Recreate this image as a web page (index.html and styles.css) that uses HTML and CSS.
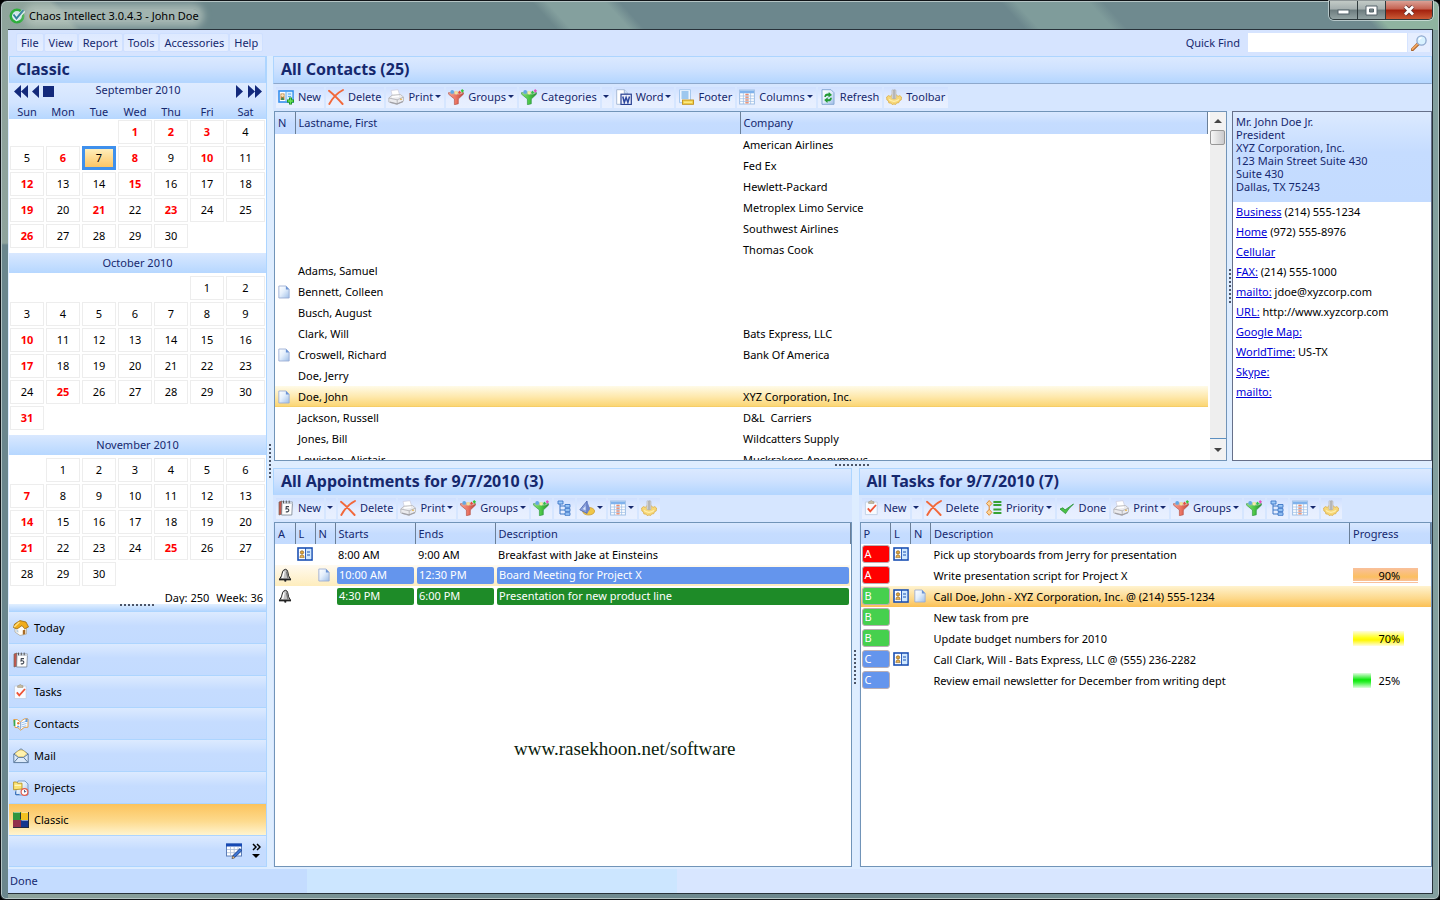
FILE: index.html
```html
<!DOCTYPE html>
<html lang="en">
<head>
<meta charset="utf-8">
<title>Chaos Intellect 3.0.4.3 - John Doe</title>
<link rel="stylesheet" href="styles.css">
</head>
<body>
<svg class="sprite" aria-hidden="true">
  <defs>
    <linearGradient id="g-page" x1="0" y1="0" x2="1" y2="1"><stop offset="0" stop-color="#fff"/><stop offset=".45" stop-color="#e4effc"/><stop offset="1" stop-color="#9fbfe8"/></linearGradient>
    <linearGradient id="g-red" x1="0" y1="0" x2="1" y2="0"><stop offset="0" stop-color="#f4a090"/><stop offset=".5" stop-color="#ec7462"/><stop offset="1" stop-color="#b8483c"/></linearGradient>
    <linearGradient id="g-green" x1="0" y1="0" x2="1" y2="0"><stop offset="0" stop-color="#8ee07a"/><stop offset=".5" stop-color="#4cc846"/><stop offset="1" stop-color="#2a8a32"/></linearGradient>
    <linearGradient id="g-metal" x1="0" y1="0" x2="1" y2="0"><stop offset="0" stop-color="#eee"/><stop offset=".5" stop-color="#a8a8a8"/><stop offset="1" stop-color="#dcdcdc"/></linearGradient>
  </defs>
  <symbol id="i-logo" viewBox="0 0 16 16"><circle cx="8" cy="8" r="6.2" fill="#cfe3ea" stroke="#2fae3c" stroke-width="2.6"/><path d="M4.5 6.5l3 4L15 2.5" fill="none" stroke="#e8f4f4" stroke-width="4"/><path d="M4.5 6.5l3 4L14.5 2" fill="none" stroke="#33809c" stroke-width="2"/></symbol>
  <symbol id="i-card" viewBox="0 0 16 16"><rect x="1" y="2" width="14" height="12" fill="#fff" stroke="#1b50b4" stroke-width="1.6"/><path d="M8.6 2v12" stroke="#1b50b4"/><rect x="9" y="3" width="5.2" height="10" fill="#cfe8ff"/><path d="M10 6h3M10 9h3" stroke="#1b50b4"/><circle cx="5" cy="6.4" r="1.7" fill="#e2a73c" stroke="#73501a" stroke-width=".6"/><path d="M2.8 11.6q0-2.8 2.2-2.8t2.2 2.8z" fill="#ecb552" stroke="#73501a" stroke-width=".5"/></symbol>
  <symbol id="i-newcard" viewBox="0 0 16 16"><rect x="1" y="2" width="14" height="11" fill="#fff" stroke="#3590ee" stroke-width="1.6"/><rect x="8.4" y="3" width="5.8" height="9.4" fill="#d7efff"/><path d="M8 2v11M10 5h3M10 7.5h3" stroke="#58a9f0"/><rect x="2.5" y="4.5" width="4" height="6.5" fill="#b8813a"/><circle cx="4.5" cy="6.5" r="1.4" fill="#fae0b6"/><path d="M3 11q.3-2.4 1.5-2.4T6 11z" fill="#3a8b56"/><path d="M12.5 8.5v7M9 12h7" stroke="#168c1d" stroke-width="3"/><path d="M12.500 9.300v5.400M9.800 12h5.400" stroke="#69e35a" stroke-width="1.400"/></symbol>
  <symbol id="i-x" viewBox="0 0 16 16"><path d="M1 1.800C5 5 10 10 14.600 15M15 1C9 4 4 10 1.300 15" fill="none" stroke="#f2683a" stroke-width="1.900" stroke-linecap="round"/></symbol>
  <symbol id="i-print" viewBox="0 0 16 16"><path d="M4.500 8L3 1.500l7-.8L12 7z" fill="#fff" stroke="#ccd" stroke-width=".7"/><path d="M.8 9L4 6.200l8.500-.7 3 2.600v4L9 15.400.8 13z" fill="#ebebee" stroke="#b5b5b8" stroke-width=".8"/><path d="M.8 9l8.400 1.800 6.300-2.700M9.200 10.800v4.400" fill="none" stroke="#acacb0" stroke-width=".8"/><path d="M2 12.600l7 1.700 6-2.400v1.400l-6 2.200-7-1.700z" fill="#a0a0a6"/><path d="M4 8l7-.8" stroke="#fff" stroke-width="1.400"/><circle cx="13" cy="10.200" r=".8" fill="#e8a41c"/></symbol>
  <symbol id="i-funnelr" viewBox="0 0 16 16"><path d="M.6 3.600h14.800v1.600L10.300 10v4.800L6.400 15.700V10L.6 5.200z" fill="url(#g-red)" stroke="#b0483a" stroke-width=".6"/><ellipse cx="8" cy="4" rx="7" ry="1.600" fill="#d8a49a"/><circle cx="4.200" cy="2.900" r="1.900" fill="#62a8e4"/><circle cx="8.200" cy="3.800" r="1.700" fill="#f2e29a"/><path d="M10.200 3.400l1.300-1.900 1.500 1.900-1.500 1.700z" fill="#e64b3c"/><path d="M14.200 0L16 1.800l-1.600 1.900-1.700-1.900z" fill="#35c435"/></symbol>
  <symbol id="i-funnelg" viewBox="0 0 16 16"><path d="M.6 3.600h14.800v1.600L10.300 10v4.800L6.400 15.700V10L.6 5.200z" fill="url(#g-green)" stroke="#25913a" stroke-width=".6"/><ellipse cx="8" cy="4" rx="7" ry="1.600" fill="#92c898"/><circle cx="4.200" cy="2.900" r="1.900" fill="#62a8e4"/><circle cx="8.200" cy="3.800" r="1.700" fill="#f6eca6"/><path d="M10.200 3.400l1.300-1.900 1.500 1.900-1.500 1.700z" fill="#2fbf4a"/><path d="M14.200 0L16 1.800l-1.600 1.900-1.700-1.900z" fill="#e452c0"/></symbol>
  <symbol id="i-word" viewBox="0 0 16 16"><path d="M.7.7h7.600l3.400 3.600v11H.7z" fill="#fff" stroke="#a8bcd8"/><path d="M8.300.7v3.600h3.400" fill="#d5e5fa" stroke="#8fa8cc" stroke-width=".8"/><rect x="5" y="5.200" width="10.300" height="10.300" fill="#eef0fb" stroke="#273f92" stroke-width="1.200"/><path d="M6.800 7.500l1.500 6 1.800-5 1.800 5 1.600-6" fill="none" stroke="#2c479e" stroke-width="1.500"/></symbol>
  <symbol id="i-footer" viewBox="0 0 16 16"><path d="M1.500.7h11v13h-11z" fill="#eef6ff" stroke="#a6c8ee"/><path d="M3.500 3h7M3.500 5h7M3.500 7h7M3.500 9h7" stroke="#4f9ae0" stroke-width="1.100"/><rect x="4.500" y="11" width="11" height="4.300" fill="#f2d44a" stroke="#c08f1c" stroke-width=".9"/><path d="M6 13.200h8" stroke="#fff2a0"/></symbol>
  <symbol id="i-cols" viewBox="0 0 16 16"><rect x=".6" y="1" width="14.800" height="14" fill="#fff" stroke="#9fbfe6"/><path d="M1 1.500h14v2.800H1z" fill="#7fb2ec"/><path d="M6.200 4.300h3.600V15H6.200z" fill="#f8d3c5"/><path d="M1 7h14M1 9.700h14M1 12.400h14M4.400 4v11M8 4v11M11.600 4v11" stroke="#9bbce4" stroke-width=".7"/><path d="M6.500 5.500h3M6.500 8.300h3M6.500 11h3M6.500 13.700h3" stroke="#ee8a6c"/></symbol>
  <symbol id="i-refresh" viewBox="0 0 16 16"><path d="M2 .7h9l3 3v11.600H2z" fill="url(#g-page)" stroke="#86a8d4"/><path d="M4.300 8Q4.600 4.200 8.600 4.600l.2-1.600 3.200 3-3.600 2.600.1-1.900Q6 6.400 5.900 8zM11.900 8.700q-.3 4-4.300 3.600l-.2 1.600-3.200-3 3.600-2.600-.1 1.900q2.400.2 2.500-1.500z" fill="#239a35"/></symbol>
  <symbol id="i-hand" viewBox="0 0 16 16"><path d="M.6 8l2-1.400 1.600.8L5.600 6h5L12 7.400l1.800-.8L15.500 8l-.3 3-1.700.7-.7 2-2.200.3-1 1.600-1.600-.6-1.800.6-1-1.400-2.400-.3-.3-2L.9 11z" fill="#f7d879" stroke="#d8a83c" stroke-width=".7"/><path d="M3 10.600q5 3.400 10 0" fill="none" stroke="#fff0b0" stroke-width="1.200"/><path d="M5.900 1.200q.9-.9 1.900-.2.900-1 2.200.3v8q-2 1.400-4.100 0z" fill="url(#g-metal)" stroke="#aaa" stroke-width=".5"/></symbol>
  <symbol id="i-cal" viewBox="0 0 16 16"><path d="M1 2l3-1v13L1 15z" fill="#c4574e" stroke="#765" stroke-width=".7"/><path d="M4 2h10.500L13.800 15H3.600z" fill="#fdfdfd" stroke="#77818e" stroke-width=".8"/><path d="M4 2h10.500v2H4z" fill="#ccd3dc"/><path d="M5.500.6v2.700M8.300.6v2.700M11.200.6v2.700" stroke="#555"/><path d="M11 6.600H8.300L8 9q2.600-.7 2.800 1.100T7.800 11.900" fill="none" stroke="#3c4450" stroke-width="1.100"/></symbol>
  <symbol id="i-task" viewBox="0 0 16 16"><path d="M1.400 2h11.800v12.600H1.400z" fill="#f8fbff" stroke="#c0cfe4" stroke-width=".9"/><path d="M4.600 3.400V1.800L6 1.400Q7.300-.5 8.600 1.400l1.400.4v1.600z" fill="#c9bda0" stroke="#94866e" stroke-width=".5"/><path d="M3.800 8.300l2.500 3L12 5" fill="none" stroke="#ee5335" stroke-width="1.800"/></symbol>
  <symbol id="i-tree" viewBox="0 0 16 16"><path d="M4 3v11h5M4 6h5M4 10h5" fill="none" stroke="#3c76c6"/><path d="M2 1h5v3H2zM9 4.500h5v2.800H9zM9 8.600h5v2.800H9zM9 12.700h5v2.600H9z" fill="#9fcbfa" stroke="#3c76c6" stroke-width=".9"/></symbol>
  <symbol id="i-shapes" viewBox="0 0 16 16"><ellipse cx="9.600" cy="11.200" rx="6" ry="3.800" fill="#efc648" stroke="#c99d38" stroke-width=".8"/><path d="M8 1v12.400L.8 9.800z" fill="#8aa0dc" stroke="#4862ad" stroke-width=".8"/><path d="M8 1l3.200 8L8 13.400z" fill="#6c84cb"/><path d="M6.500 6v4.300L3.800 9z" fill="#d7e4fc"/></symbol>
  <symbol id="i-prio" viewBox="0 0 16 16"><path d="M7.400 2h8M7.400 5h8M7.400 9.500h8M7.400 13h8" stroke="#37a234" stroke-width="1.800"/><path d="M3.200.5l2.700 3-2.700 3-2.700-3zM3.200 9.300l2.700 3-2.700 3-2.700-3z" fill="#fbd49a" stroke="#dc8428" stroke-width=".9"/><path d="M3.200 6.500v3" stroke="#dc8428"/></symbol>
  <symbol id="i-check" viewBox="0 0 16 16"><path d="M1 9l3-1.200 2 2.200L14.500 4q-5.500 5-8 9.600z" fill="#4cc344" stroke="#269033" stroke-width=".8"/></symbol>
  <symbol id="i-page" viewBox="0 0 14 16"><path d="M1 1h8.400L13 4.800V15H1z" fill="url(#g-page)" stroke="#98abd2"/><path d="M9.200 1v4H13z" fill="#6c94d4"/></symbol>
  <symbol id="i-bell" viewBox="0 0 16 16"><path d="M8.500 2.300Q6 2.700 5.500 5 5 9 2.500 12.200h11Q11 9 10.800 4.800 10.200 2.400 8.500 2.300z" fill="#c3c3c3" stroke="#222"/><path d="M7 4.500L5.600 11" stroke="#fff" stroke-width="1.400"/><path d="M9.500 4.500L11 11" stroke="#777" stroke-width="1.400"/><path d="M2 12.600h12" stroke="#222" stroke-width="1.500"/><circle cx="8.300" cy="13.700" r="1.100" fill="#222"/></symbol>
  <symbol id="i-home" viewBox="0 0 16 16"><path d="M2 8l5-3.500L13.500 8v6L7 15.500 2 12z" fill="#fffdf8" stroke="#aaa08a" stroke-width=".7"/><path d="M.5 7.500L1.600 4 7 .6 13 2l2.500 5-3.800 1.800L9 5.600 4 9z" fill="#f0ac1b" stroke="#9b6813" stroke-width=".8"/><path d="M1.200 7l5.200-5" stroke="#ffe083" stroke-width="1.500"/><path d="M9.800 10.200l2.500-.8V14l-2.500.8z" fill="#a76a24"/><path d="M3.400 9.500l2 1v2.200l-2-1z" fill="#b9cede"/></symbol>
  <symbol id="i-book" viewBox="0 0 16 16"><path d="M.7 3.500q4-1 6.800 2.600Q11 1.500 15 3v8.200q-4-1-7.300 3Q5 10.500 2 11.400z" fill="#fff" stroke="#e0a04e"/><path d="M1.500 4v6" stroke="#36a850" stroke-width="1.700"/><path d="M7.600 6v7.500" stroke="#8faace"/><path d="M8.300 7l5.200-1.800M8.300 9l5.200-1.600M8.300 11l5-1.300" stroke="#9cc2ee"/><circle cx="5.300" cy="7.200" r="1.200" fill="#e87832"/><path d="M4 11q.8-3 3 .4zM12.500 3v3h2V2.500z" fill="#5b9be5"/></symbol>
  <symbol id="i-mail" viewBox="0 0 16 16"><path d="M.8 6L8 .8 15.200 6v8.600H.8z" fill="#dceafa" stroke="#5e7c9f"/><path d="M2.200 5.500Q8-1.600 13.800 5.500l-3 3.400H5.200z" fill="#fff2ae" stroke="#dbb84f" stroke-width=".7"/><path d="M.8 6l4.600 3.400h5.200L15.200 6M1 14.400l4.400-5M15 14.400l-4.400-5" fill="none" stroke="#5e7c9f"/></symbol>
  <symbol id="i-proj" viewBox="0 0 16 16"><path d="M5 1h7l3 3v11H3V7z" fill="url(#g-page)" stroke="#6e95c6" stroke-width=".9"/><path d="M.6 2h3l1 1.200H9V9L.6 9.800z" fill="#fbe372" stroke="#b79427" stroke-width=".9"/><path d="M1.500 5.300h6.600" stroke="#fffbd0"/><circle cx="11.500" cy="12" r="3.400" fill="#fff" stroke="#e35b4a" stroke-width="1.200"/><path d="M11.500 10v2.200l1.800-1" fill="none" stroke="#55658c"/><path d="M2.500 11.500v3h4" fill="none" stroke="#3e75be"/></symbol>
  <symbol id="i-classic" viewBox="0 0 16 16"><path d="M0 0h8v8H0z" fill="#30953e"/><path d="M8 0h8v8H8z" fill="#f3c221"/><path d="M0 8h8v8H0z" fill="#92304c"/><path d="M8 8h8v8H8z" fill="#15368e"/><path d="M0 15.500h16M7.500 1v6M15.500 0v16" stroke="#222a3a" stroke-width=".9"/><path d="M.5.500H7M8.500.5H15M8.500 8.500H15" stroke="#fff" stroke-opacity=".5"/></symbol>
  <symbol id="i-config" viewBox="0 0 16 16"><rect x=".5" y="1" width="15" height="12" fill="#fff" stroke="#5c7db8"/><path d="M0 .5h16v3H0z" fill="#1649b4"/><path d="M1 6.500h14M1 9.700h14M4.500 4v9M8.200 4v9M12 4v9" stroke="#a9bbd8" stroke-width=".8"/><path d="M14 5.600l1.900 1.900-7 6.800-2.700 1.100.8-2.900z" fill="#3d76d4" stroke="#12357f" stroke-width=".8"/><path d="M6 15.700l.8-3 2.200 2z" fill="#f3c690" stroke="#50401c" stroke-width=".4"/></symbol>
  <symbol id="i-find" viewBox="0 0 16 16"><path d="M1.400 14.600L7 9" stroke="#a9622c" stroke-width="3.200" stroke-linecap="round"/><path d="M1.400 14.200L6.800 8.900" stroke="#f4a862" stroke-width="1.700" stroke-linecap="round"/><circle cx="10.500" cy="5.500" r="4.600" fill="#d9f2ff" stroke="#8fa9cf" stroke-width="1.300"/><path d="M8 5q.5-2 2.600-2.300" fill="none" stroke="#fff" stroke-width="1.500"/></symbol>
</svg>

<div class="window">
  <header class="titlebar">
    <h1 class="app-name"><svg class="icon"><use href="#i-logo"/></svg><span>Chaos Intellect 3.0.4.3 - John Doe</span></h1>
    <div class="win-buttons">
      <button class="win-btn" aria-label="Minimize"><svg width="14" height="10"><rect x="1" y="5" width="11" height="4" fill="#fff" stroke="#55636a"/></svg></button>
      <button class="win-btn" aria-label="Maximize"><svg width="13" height="11"><path d="M1 1h11v9H1zM4.500 4v3h4V4z" fill="#fff" fill-rule="evenodd" stroke="#55636a"/></svg></button>
      <button class="win-btn win-close" aria-label="Close"><svg width="14" height="11"><path d="M3 1.500l8 8M11 1.500l-8 8" stroke="#5c3030" stroke-width="4.400"/><path d="M3 1.500l8 8M11 1.500l-8 8" stroke="#fff" stroke-width="2.800"/></svg></button>
    </div>
  </header>

  <div class="client">
    <div class="menubar">
      <nav class="menus">
        <button>File</button><button>View</button><button>Report</button><button>Tools</button><button>Accessories</button><button>Help</button>
      </nav>
      <form class="quick-find">
        <label for="find">Quick Find</label>
        <input id="find" type="text">
        <button type="button" aria-label="Search"><svg class="icon"><use href="#i-find"/></svg></button>
      </form>
    </div>

    <div class="workspace">
      <aside class="sidebar">
        <h2 class="title">Classic</h2>
        <div class="month-nav">
          <div class="steps">
            <button aria-label="Previous year"><svg width="14" height="13"><path d="M7 0v13L0 6.500zM14 0v13L7 6.500z"/></svg></button>
            <button aria-label="Previous month"><svg width="7" height="13"><path d="M7 0v13L0 6.500z"/></svg></button>
            <button aria-label="Today"><svg width="11" height="11"><path d="M0 0h11v11H0z"/></svg></button>
          </div>
          <span>September 2010</span>
          <div class="steps steps-next">
            <button aria-label="Next month"><svg width="7" height="13"><path d="M0 0v13l7-6.500z"/></svg></button>
            <button aria-label="Next year"><svg width="14" height="13"><path d="M0 0v13l7-6.500zM7 0v13l7-6.500z"/></svg></button>
          </div>
        </div>
        <div class="months">
          <table class="month" data-offset="3" data-days="30" data-busy="1,2,3,6,8,10,12,15,19,21,23,26" data-today="7">
            <thead><tr><th>Sun</th><th>Mon</th><th>Tue</th><th>Wed</th><th>Thu</th><th>Fri</th><th>Sat</th></tr></thead>
          </table>
          <h3 class="month-name">October 2010</h3>
          <table class="month" data-offset="5" data-days="31" data-busy="10,17,25,31"></table>
          <h3 class="month-name">November 2010</h3>
          <table class="month" data-offset="1" data-days="30" data-busy="7,14,21,25"></table>
          <p class="day-count"><span>Day: 250</span><span>Week: 36</span></p>
        </div>
        <div class="nav-splitter"><i class="grip"></i></div>
        <nav class="nav">
          <button><svg class="icon"><use href="#i-home"/></svg>Today</button>
          <button><svg class="icon"><use href="#i-cal"/></svg>Calendar</button>
          <button><svg class="icon"><use href="#i-task"/></svg>Tasks</button>
          <button><svg class="icon"><use href="#i-book"/></svg>Contacts</button>
          <button><svg class="icon"><use href="#i-mail"/></svg>Mail</button>
          <button><svg class="icon"><use href="#i-proj"/></svg>Projects</button>
          <button class="active"><svg class="icon"><use href="#i-classic"/></svg>Classic</button>
        </nav>
        <div class="nav-foot">
          <button aria-label="Configure"><svg class="icon"><use href="#i-config"/></svg></button>
          <button aria-label="More"><svg width="9" height="16"><path d="M1 1l3 3-3 3M5 1l3 3-3 3" fill="none" stroke="#000" stroke-width="1.500"/><path d="M0 11h8l-4 4z"/></svg></button>
        </div>
      </aside>

      <div class="splitter-v slim"><i class="grip grip-v"></i></div>

      <main class="panels">
        <section class="panel upper">
          <h2 class="title">All Contacts (25)</h2>
          <div class="toolbar">
            <button><svg class="icon"><use href="#i-newcard"/></svg>New</button>
            <button><svg class="icon"><use href="#i-x"/></svg>Delete</button>
            <button class="drop"><svg class="icon"><use href="#i-print"/></svg>Print</button>
            <button class="drop"><svg class="icon"><use href="#i-funnelr"/></svg>Groups</button>
            <button><svg class="icon"><use href="#i-funnelg"/></svg>Categories</button><button class="drop lone" aria-label="Category options"></button>
            <button class="drop"><svg class="icon"><use href="#i-word"/></svg>Word</button>
            <button><svg class="icon"><use href="#i-footer"/></svg>Footer</button>
            <button class="drop"><svg class="icon"><use href="#i-cols"/></svg>Columns</button>
            <button><svg class="icon"><use href="#i-refresh"/></svg>Refresh</button>
            <button><svg class="icon"><use href="#i-hand"/></svg>Toolbar</button>
          </div>
          <div class="contacts">
            <div class="listbox with-scroll">
              <div class="scroll-view">
                <table class="grid">
                  <colgroup><col class="c-n"><col class="c-name"><col></colgroup>
                  <thead><tr><th>N</th><th>Lastname, First</th><th>Company</th></tr></thead>
                  <tbody>
                    <tr><td></td><td></td><td>American Airlines</td></tr>
                    <tr><td></td><td></td><td>Fed Ex</td></tr>
                    <tr><td></td><td></td><td>Hewlett-Packard</td></tr>
                    <tr><td></td><td></td><td>Metroplex Limo Service</td></tr>
                    <tr><td></td><td></td><td>Southwest Airlines</td></tr>
                    <tr><td></td><td></td><td>Thomas Cook</td></tr>
                    <tr><td></td><td>Adams, Samuel</td><td></td></tr>
                    <tr><td><svg class="page"><use href="#i-page"/></svg></td><td>Bennett, Colleen</td><td></td></tr>
                    <tr><td></td><td>Busch, August</td><td></td></tr>
                    <tr><td></td><td>Clark, Will</td><td>Bats Express, LLC</td></tr>
                    <tr><td><svg class="page"><use href="#i-page"/></svg></td><td>Croswell, Richard</td><td>Bank Of America</td></tr>
                    <tr><td></td><td>Doe, Jerry</td><td></td></tr>
                    <tr class="selected"><td><svg class="page"><use href="#i-page"/></svg></td><td>Doe, John</td><td>XYZ Corporation, Inc.</td></tr>
                    <tr><td></td><td>Jackson, Russell</td><td>D&amp;L&nbsp; Carriers</td></tr>
                    <tr><td></td><td>Jones, Bill</td><td>Wildcatters Supply</td></tr>
                    <tr><td></td><td>Lewiston, Alistair</td><td>Muckrakers Anonymous</td></tr>
                  </tbody>
                </table>
              </div>
              <div class="scrollbar">
                <button class="sb-up" aria-label="Scroll up"></button>
                <div class="sb-track"><div class="sb-thumb"></div></div>
                <button class="sb-down" aria-label="Scroll down"></button>
              </div>
            </div>
            <div class="splitter-v narrow"><i class="grip grip-v"></i></div>
            <aside class="details">
              <address class="details-head">Mr. John Doe Jr.<br>President<br>XYZ Corporation, Inc.<br>123 Main Street Suite 430<br>Suite 430<br>Dallas, TX 75243</address>
              <ul class="details-list">
                <li><a href="#">Business</a> (214) 555-1234</li>
                <li><a href="#">Home</a> (972) 555-8976</li>
                <li><a href="#">Cellular</a></li>
                <li><a href="#">FAX:</a> (214) 555-1000</li>
                <li><a href="#">mailto:</a> jdoe@xyzcorp.com</li>
                <li><a href="#">URL:</a> http://www.xyzcorp.com</li>
                <li><a href="#">Google Map:</a></li>
                <li><a href="#">WorldTime:</a> US-TX</li>
                <li><a href="#">Skype:</a></li>
                <li><a href="#">mailto:</a></li>
              </ul>
            </aside>
          </div>
        </section>

        <div class="splitter-h"><i class="grip"></i></div>

        <div class="lower">
          <section class="panel">
            <h2 class="title">All Appointments for 9/7/2010 (3)</h2>
            <div class="toolbar">
              <button><svg class="icon"><use href="#i-cal"/></svg>New</button><button class="drop lone" aria-label="New options"></button>
              <button><svg class="icon"><use href="#i-x"/></svg>Delete</button>
              <button class="drop"><svg class="icon"><use href="#i-print"/></svg>Print</button>
              <button class="drop"><svg class="icon"><use href="#i-funnelr"/></svg>Groups</button>
              <button aria-label="Categories"><svg class="icon"><use href="#i-funnelg"/></svg></button>
              <button aria-label="Tree"><svg class="icon"><use href="#i-tree"/></svg></button>
              <button class="drop" aria-label="View"><svg class="icon"><use href="#i-shapes"/></svg></button>
              <button class="drop" aria-label="Columns"><svg class="icon"><use href="#i-cols"/></svg></button>
              <button aria-label="Toolbar"><svg class="icon"><use href="#i-hand"/></svg></button>
            </div>
            <div class="listbox">
              <table class="grid">
                <colgroup><col class="c-n"><col class="c-n"><col class="c-n"><col class="c-time"><col class="c-time"><col></colgroup>
                <thead><tr><th>A</th><th>L</th><th>N</th><th>Starts</th><th>Ends</th><th>Description</th></tr></thead>
                <tbody>
                  <tr><td></td><td><svg class="icon"><use href="#i-card"/></svg></td><td></td><td>8:00 AM</td><td>9:00 AM</td><td>Breakfast with Jake at Einsteins</td></tr>
                  <tr class="selected pale"><td><svg class="icon"><use href="#i-bell"/></svg></td><td></td><td><svg class="page"><use href="#i-page"/></svg></td><td><span class="fill blue">10:00 AM</span></td><td><span class="fill blue">12:30 PM</span></td><td><span class="fill blue">Board Meeting for Project X</span></td></tr>
                  <tr><td><svg class="icon"><use href="#i-bell"/></svg></td><td></td><td></td><td><span class="fill green">4:30 PM</span></td><td><span class="fill green">6:00 PM</span></td><td><span class="fill green">Presentation for new product line</span></td></tr>
                </tbody>
              </table>
              <p class="watermark">www.rasekhoon.net/software</p>
            </div>
          </section>
          <div class="splitter-v"><i class="grip grip-v"></i></div>
          <section class="panel">
            <h2 class="title">All Tasks for 9/7/2010 (7)</h2>
            <div class="toolbar">
              <button><svg class="icon"><use href="#i-task"/></svg>New</button><button class="drop lone" aria-label="New options"></button>
              <button><svg class="icon"><use href="#i-x"/></svg>Delete</button>
              <button class="drop"><svg class="icon"><use href="#i-prio"/></svg>Priority</button>
              <button><svg class="icon"><use href="#i-check"/></svg>Done</button>
              <button class="drop"><svg class="icon"><use href="#i-print"/></svg>Print</button>
              <button class="drop"><svg class="icon"><use href="#i-funnelr"/></svg>Groups</button>
              <button aria-label="Categories"><svg class="icon"><use href="#i-funnelg"/></svg></button>
              <button aria-label="Tree"><svg class="icon"><use href="#i-tree"/></svg></button>
              <button class="drop" aria-label="Columns"><svg class="icon"><use href="#i-cols"/></svg></button>
              <button aria-label="Toolbar"><svg class="icon"><use href="#i-hand"/></svg></button>
            </div>
            <div class="listbox">
              <table class="grid">
                <colgroup><col class="c-p"><col class="c-n"><col class="c-n"><col><col class="c-prog"></colgroup>
                <thead><tr><th>P</th><th>L</th><th>N</th><th>Description</th><th>Progress</th></tr></thead>
                <tbody>
                  <tr><td><span class="prio a">A</span></td><td><svg class="icon"><use href="#i-card"/></svg></td><td></td><td>Pick up storyboards from Jerry for presentation</td><td></td></tr>
                  <tr><td><span class="prio a">A</span></td><td></td><td></td><td>Write presentation script for Project X</td><td><div class="meter"><i class="bar orange" style="width:90%"></i><span>90%</span></div></td></tr>
                  <tr class="selected"><td><span class="prio b">B</span></td><td><svg class="icon"><use href="#i-card"/></svg></td><td><svg class="page"><use href="#i-page"/></svg></td><td>Call Doe, John - XYZ Corporation, Inc. @ (214) 555-1234</td><td></td></tr>
                  <tr><td><span class="prio b">B</span></td><td></td><td></td><td>New task from pre</td><td></td></tr>
                  <tr><td><span class="prio b">B</span></td><td></td><td></td><td>Update budget numbers for 2010</td><td><div class="meter"><i class="bar yellow" style="width:70%"></i><span>70%</span></div></td></tr>
                  <tr><td><span class="prio c">C</span></td><td><svg class="icon"><use href="#i-card"/></svg></td><td></td><td>Call Clark, Will - Bats Express, LLC @ (555) 236-2282</td><td></td></tr>
                  <tr><td><span class="prio c">C</span></td><td></td><td></td><td>Review email newsletter for December from writing dept</td><td><div class="meter"><i class="bar lime" style="width:25%"></i><span>25%</span></div></td></tr>
                </tbody>
              </table>
            </div>
          </section>
        </div>
      </main>
    </div>

    <footer class="status">Done</footer>
  </div>
</div>
<script src="calendar.js"></script>
</body>
</html>
```
FILE: calendar.js
```js
// Fills each month table with week rows of day buttons.
document.querySelectorAll('.month').forEach(function (table) {
  var offset = Number(table.dataset.offset);
  var days = Number(table.dataset.days);
  var busy = table.dataset.busy.split(',').map(Number);
  var today = Number(table.dataset.today || 0);
  var body = document.createElement('tbody');
  var row;
  for (var i = 0; i < offset + days; i++) {
    if (i % 7 === 0) {
      row = document.createElement('tr');
      body.appendChild(row);
    }
    var cell = document.createElement('td');
    var day = i - offset + 1;
    if (day > 0) {
      var button = document.createElement('button');
      button.textContent = day;
      button.className = 'day' + (busy.includes(day) ? ' busy' : '') + (day === today ? ' today' : '');
      cell.appendChild(button);
    }
    row.appendChild(cell);
  }
  table.appendChild(body);
});
```
FILE: styles.css
```css
* { box-sizing: border-box; }

body {
  margin: 0;
  font: 11px/13px "Noto Sans", "Open Sans", sans-serif;
  color: #000;
  background: #000;
}

button, input { font: inherit; color: inherit; }
button { margin: 0; padding: 0; border: 0; background: none; }
h1, h2, h3, p, ul { margin: 0; padding: 0; font-size: inherit; font-weight: inherit; }
svg { display: block; flex: none; }
.sprite { position: absolute; width: 0; height: 0; }
.icon { width: 16px; height: 16px; }
.page { width: 12px; height: 14px; }

/* Window frame */
.window {
  display: flex;
  flex-direction: column;
  height: 100vh;
  padding: 0 6px 5px 7px;
  border: 1px solid #101418;
  border-radius: 7px 7px 6px 6px;
  box-shadow: inset 0 0 0 1px #b5c5c5;
  background:
    linear-gradient(180deg, transparent 242px, #6a868c 244px) 0 0 / 7px 100% no-repeat,
    linear-gradient(48deg, transparent 0 5%, #6d888c 5.5% 38%, #84a09e 39% 43%, #6c878d 44% 70%, #7f9c9b 71% 76%, #6f8a8f 77% 94%, #8fb3a0 95%) 0 0 / 100% 29px no-repeat,
    linear-gradient(90deg, #8fa49c, #728d92 30%, #6c868c 60%, #829f9e);
}

.titlebar { display: flex; justify-content: space-between; flex: none; height: 28px; }
.app-name {
  display: flex;
  align-items: center;
  gap: 4px;
  padding: 1px 0 0 1px;
  font-size: 12px;
}
.app-name span { background: rgba(190, 205, 195, .65); box-shadow: 0 0 7px 5px rgba(190, 205, 195, .65); border-radius: 8px; font-size: 11px; }
.win-buttons {
  display: flex;
  height: 19px;
  border: 1px solid #2e393c;
  border-top: 0;
  border-radius: 0 0 5px 5px;
  box-shadow: 0 0 0 1px rgba(230, 240, 240, .6);
  overflow: hidden;
}
.win-btn {
  display: grid;
  place-items: center;
  width: 28px;
  border-right: 1px solid #2e393c;
  background: linear-gradient(#c2cac6, #a4afaf 45%, #6c7b7e 50%, #94a3a3);
}
.win-close { width: 46px; border: 0; background: linear-gradient(#dba095, #c4604f 45%, #a2200d 50%, #cb5a35); }

.client {
  display: flex;
  flex-direction: column;
  flex: 1;
  min-height: 0;
  border: solid #28323a;
  border-width: 1px 1px 1px 0;
  background: #deedff;
}

/* Menu bar */
.menubar { display: flex; justify-content: space-between; flex: none; height: 26px; padding: 3px 2px 4px 8px; background: #d6e4ff; color: #15286e; }
.menus { display: flex; }
.menus button { padding: 0 4px 1px; border: 1px solid #cfe0ff; border-radius: 2px; background: linear-gradient(#dde9ff, #e6eeff); }
.quick-find { display: flex; align-items: center; }
.quick-find input { width: 159px; height: 19px; margin: 0 1px 0 8px; border: 0; background: #fff; }
.quick-find button { display: grid; place-items: center; width: 22px; height: 19px; background: #e6eeff; }

.workspace { display: flex; flex: 1; min-height: 0; padding: 0 0 2px 1px; }

.title {
  flex: none;
  height: 28px;
  padding: 0 7px;
  border: 1px solid #add5ff;
  border-bottom-color: #8da8cc;
  background: linear-gradient(#dbe9ff, #cfe2ff 45%, #b4d6ff);
  color: #15286e;
  font: bold 16px/25px "Noto Sans", "Open Sans", sans-serif;
}

/* Sidebar */
.sidebar { display: flex; flex-direction: column; flex: none; width: 258px; border-right: 1px solid #add5ff; background: #c5dcff; }
.sidebar .title { height: 27px; padding: 0 6px; border-bottom-color: #b4d6ff; }
.month-nav { display: grid; grid-template-columns: 1fr auto 1fr; align-items: start; flex: none; padding: 0 4px 0 5px; height: 20px; color: #15286e; background: linear-gradient(#deebff, #d2e4ff); }
.steps { display: flex; align-items: center; gap: 4px; padding-top: 2px; }
.steps-next { justify-content: flex-end; gap: 5px; }
.steps svg { fill: #13297b; }
.months { flex: 1; min-height: 0; overflow: hidden; background: #fff; }
.month { width: 100%; table-layout: fixed; border-collapse: collapse; margin-bottom: 4px; }
.month th { height: 16px; padding: 0; font-weight: normal; line-height: 15px; color: #15286e; }
.month tr > :nth-child(-n+6) { width: 36px; }
.month thead { background: linear-gradient(#d2e4ff, #b6d7ff); }
.month td { height: 26px; padding: 1px; }
.day { display: block; width: 100%; height: 24px; padding-bottom: 2px; border: 1px solid #ededed; background: #fff; }
.busy { color: #f00; font-weight: bold; }
.today { border: 3px solid #3f90ec; background: linear-gradient(#ffeebb, #fcc565); }
.month-name { height: 20px; margin-bottom: 2px; background: linear-gradient(#d9e8ff, #b6d7ff); color: #15286e; line-height: 20px; text-align: center; }
.day-count { display: flex; justify-content: flex-end; gap: 7px; padding-right: 3px; }
.nav-splitter { display: flex; justify-content: center; flex: none; height: 7px; background: linear-gradient(#e2efff, #b4d6ff); }
.nav { flex: none; }
.nav button { display: flex; align-items: center; gap: 5px; width: 100%; height: 32px; padding: 0 4px; border-top: 1px solid #add5ff; background: linear-gradient(#dceaff, #c5dcff 45%, #c3dbff); }
.nav .active { background: linear-gradient(#fcc35c, #fdda8d 55%, #fff4cf); }
.nav-foot { display: flex; justify-content: flex-end; align-items: center; gap: 10px; flex: none; height: 32px; padding-right: 5px; border: solid #add5ff; border-width: 1px 0; background: linear-gradient(#dceaff, #c5dcff 45%); }

/* Splitters */
.splitter-v { display: flex; align-items: center; justify-content: center; flex: none; width: 7px; }
.splitter-v.slim { width: 6px; }
.splitter-v.narrow { width: 5px; }
.splitter-h { display: flex; align-items: center; justify-content: center; flex: none; height: 7px; }
.grip { width: 35px; height: 2px; background: repeating-linear-gradient(90deg, #4c5568 0 2px, transparent 2px 4px); }
.grip-v { width: 2px; height: 35px; background: repeating-linear-gradient(#4c5568 0 2px, transparent 2px 4px); }

/* Panels */
.panels { display: flex; flex-direction: column; flex: 1; min-width: 0; }
.panel { display: flex; flex-direction: column; flex: 1 1 0; min-width: 0; min-height: 0; background: #d6e6ff; }
.upper { flex-grow: 405; }
.lower { display: flex; flex: 399 1 0; min-height: 0; }
.lower .panel:first-child { flex-grow: 578; }
.lower .panel:last-child { flex-grow: 573; }
.lower .title { height: 27px; border-bottom-color: #b4d6ff; }
.toolbar { display: flex; gap: 2px; flex: none; height: 27px; padding: 3px; overflow: hidden; color: #15286e; }
.toolbar button { display: flex; align-items: center; gap: 4px; flex: none; height: 21px; padding: 0 3px 2px 2px; background: linear-gradient(#cfe0ff, #e6eeff 60%, #e8f0ff); }
.drop::after { content: ""; margin-left: -2px; border: 3px solid transparent; border-top-color: #15286e; border-bottom: 0; }
.toolbar .lone { padding: 0 3px 2px 1px; }
.drop.lone::after { margin-left: 0; }

.contacts { display: flex; flex: 1; min-height: 0; background: #deedff; }
.listbox { position: relative; flex: 1; min-width: 0; min-height: 0; margin-left: 1px; overflow: hidden; border: 1px solid #7194b8; background: #fff; }
.with-scroll { display: flex; }
.scroll-view { flex: 1; min-width: 0; margin-right: 2px; overflow: hidden; }
.grid { width: 100%; table-layout: fixed; border-collapse: collapse; }
.grid thead { background: linear-gradient(#d9e8ff, #c5dcff 50%, #c3dbff); }
.grid th { height: 21px; padding: 0 3px 1px; border-right: 1px solid #6a7f98; color: #15286e; font-weight: normal; text-align: left; }
.grid td { height: 21px; padding: 0 3px; overflow: hidden; white-space: nowrap; }
.upper .grid th { height: 22px; }
.lower .grid td { padding-bottom: 1px; }
.grid td > svg.icon { margin-left: -1px; }
.selected { background: linear-gradient(#fffbe8, #fee9ae 50%, #fbd675 95%, #f1c65b); }
.lower .selected { background: linear-gradient(#fff3cf, #fdd88a 60%, #fbc055); }
.lower .pale { background: linear-gradient(#fffaf0, #feedbd); }
.c-n { width: 20px; }
.c-p { width: 30px; }
.c-name { width: 445px; }
.c-time { width: 80px; }
.c-prog { width: 81px; }

.fill { display: block; height: 17px; margin: 0 -2px 0 -1px; padding: 0 2px; border-radius: 2px; color: #fff; line-height: 16px; }
.blue { background: #6495ed; }
.green { background: #1e8b28; }
.prio { display: block; width: 28px; height: 18px; margin-left: -2px; padding-left: 2px; border: 1px solid #b9aeb4; border-radius: 3px; color: #fff; line-height: 16px; }
.a { background: #f00; }
.b { background: #46d04e; }
.c { background: #6495ed; }
.meter { display: grid; align-items: center; width: 73px; height: 15px; }
.meter > * { grid-area: 1 / 1; }
.meter span { padding-left: 26px; }
.bar { height: 15px; }
.orange { background: linear-gradient(#f9c09c, #fbbf60 60%, #f9c09c 88%, #fff 88% 94%, #f9c09c 94%); }
.yellow { background: linear-gradient(#fffde0, #ffff1c 45%, #fff700 60%, #fffde0); }
.lime { background: linear-gradient(#e0fde0, #0be80b 45%, #2bf02b 60%, #e0fde0); }
.watermark { position: absolute; top: 216px; left: 239px; color: #0a1c0c; font: 19px/20px "Liberation Serif", serif; }

/* Scrollbar */
.scrollbar { display: flex; flex-direction: column; flex: none; width: 16px; background: #eee; }
.scrollbar button { display: grid; place-items: center; height: 18px; background: #f2f2f2; }
.sb-up::after { content: ""; border: 4px solid transparent; border-top: 0; border-bottom-color: #444; }
.sb-down::after { content: ""; border: 4px solid transparent; border-bottom: 0; border-top-color: #444; }
.scrollbar .sb-down { height: 22px; border-top: 1px solid #5c8fc0; }
.sb-track { flex: 1; }
.sb-thumb { width: 15px; height: 15px; border: 1px solid #979797; border-radius: 2px; background: linear-gradient(90deg, #f6f6f6, #e0e0e0 50%, #cacacd); }

/* Contact details */
.details { flex: none; width: 200px; border: 1px solid #66708a; background: #fff; }
.details-head { padding: 3px 3px 9px; background: linear-gradient(#dceaff, #c5dcff 45%, #c3dbff); color: #15286e; font-style: normal; }
.details-list { list-style: none; padding: 0 3px; line-height: 20px; }
.details a { color: #0000d8; }

.status { flex: none; height: 24px; padding-left: 2px; background: linear-gradient(90deg, #c4dcff 0 21%, #cce6ff 21% 47%, #d8e6ff 47%); color: #15286e; line-height: 23px; }
```
